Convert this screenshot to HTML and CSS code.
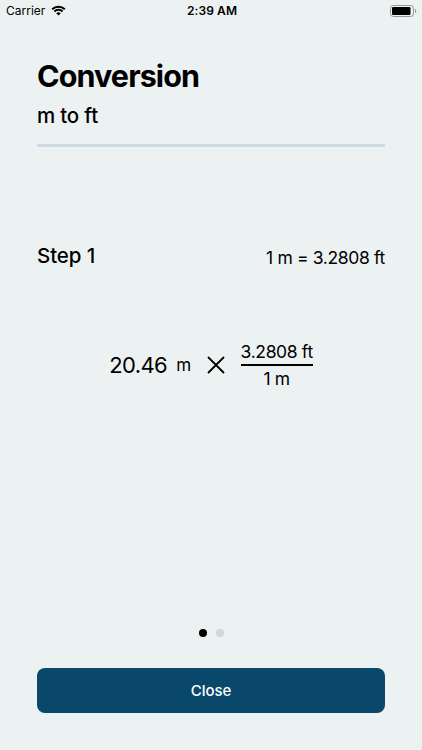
FILE: index.html
```html
<!DOCTYPE html>
<html lang="en">
<head>
    <meta charset="UTF-8">
    <meta name="viewport" content="width=device-width, initial-scale=1.0">
    <title>Conversion</title>
    <link rel="stylesheet" href="styles.css">
</head>
<body>
    <div class="status-bar">
        <div class="carrier">
            <span>Carrier</span>
            <svg class="wifi" width="15" height="11" viewBox="0 0 15 11">
                <path d="M1.2 4.2a9 9 0 0 1 12.6 0M3.4 6.5a5.8 5.8 0 0 1 8.2 0" fill="none" stroke="#000" stroke-width="2"/>
                <path d="M5.2 8.3a3.3 3.3 0 0 1 4.6 0L7.5 10.6z"/>
            </svg>
        </div>
        <span class="time">2:39 AM</span>
        <svg class="battery" width="27" height="12" viewBox="0 0 27 12">
            <rect x="0.5" y="0.5" width="23" height="11" rx="2.8" fill="none" stroke="#949898"/>
            <rect x="2" y="2" width="18.5" height="8" rx="1.2"/>
            <path d="M25 4c1.7.5 1.7 3.5 0 4z" fill="#949898"/>
        </svg>
    </div>
    <main class="container">
        <h1>Conversion</h1>
        <h2>m to ft</h2>
        <hr>
        <div class="step">
            <h3>Step 1</h3>
            <span class="rate">1 m = 3.2808 ft</span>
        </div>
        <div class="equation">
            <span class="amount">20.46</span>
            <span class="unit">m</span>
            <svg class="times" width="18" height="18" viewBox="0 0 18 18">
                <path d="M1.5 1.5l15 15M16.5 1.5l-15 15" stroke="#000" stroke-width="1.8" stroke-linecap="round"/>
            </svg>
            <div class="fraction">
                <span class="numerator">3.2808 ft</span>
                <span class="denominator">1 m</span>
            </div>
        </div>
        <div class="dots">
            <span class="dot active"></span>
            <span class="dot"></span>
        </div>
        <button class="close">Close</button>
    </main>
</body>
</html>
```

FILE: styles.css
```css
* {
    box-sizing: border-box;
}
body {
    font-family: Inter, "Liberation Sans", sans-serif;
    margin: 0;
    height: 750px;
    display: flex;
    flex-direction: column;
    background-color: #ecf1f2;
    color: #000;
    overflow: hidden;
}
.status-bar {
    display: grid;
    grid-template-columns: 1fr auto 1fr;
    align-items: center;
    height: 21px;
    padding: 0 5px 0 6px;
    font-size: 12px;
}
.carrier {
    display: flex;
    align-items: center;
    gap: 6px;
}
.time {
    padding-left: 1px;
    font-weight: 600;
    letter-spacing: 0.1px;
}
.battery {
    justify-self: end;
}
.container {
    flex: 1;
    display: flex;
    flex-direction: column;
    padding: 35px 37px 37px;
}
h1 {
    margin: 0;
    font-size: 30.5px;
    line-height: 40px;
    font-weight: 700;
    letter-spacing: -0.9px;
}
h2 {
    margin: 6px 0 0;
    font-size: 20.5px;
    line-height: 28px;
    font-weight: 500;
    letter-spacing: -0.2px;
}
hr {
    width: 100%;
    height: 3px;
    margin: 14px 0 0;
    border: none;
    background-color: #ccdae3;
}
.step {
    display: flex;
    justify-content: space-between;
    margin-top: 95px;
}
h3 {
    margin: 0;
    font-size: 20.5px;
    line-height: 28px;
    font-weight: 500;
    letter-spacing: -0.1px;
}
.rate {
    padding-top: 4px;
    font-size: 17.5px;
    line-height: 24px;
    letter-spacing: -0.35px;
}
.equation {
    display: flex;
    justify-content: center;
    align-items: center;
    margin-top: 69px;
    white-space: nowrap;
}
.amount {
    font-size: 22px;
    letter-spacing: -0.6px;
}
.unit {
    margin: 0 16px 0 9px;
    font-size: 17px;
    letter-spacing: -0.5px;
}
.times {
    margin-right: 16px;
}
.fraction {
    display: flex;
    flex-direction: column;
    font-size: 17.5px;
    line-height: 25px;
    letter-spacing: -0.35px;
    text-align: center;
}
.numerator {
    border-bottom: 2px solid #000;
}
.dots {
    display: flex;
    justify-content: center;
    gap: 9px;
    margin-top: auto;
}
.dot {
    width: 8px;
    height: 8px;
    border-radius: 50%;
    background-color: #ccdae0;
}
.dot.active {
    background-color: #000;
}
.close {
    height: 45px;
    margin-top: 31px;
    border: none;
    border-radius: 8px;
    background-color: #09486b;
    color: #fff;
    font-family: inherit;
    font-size: 15px;
    font-weight: 500;
}
```
